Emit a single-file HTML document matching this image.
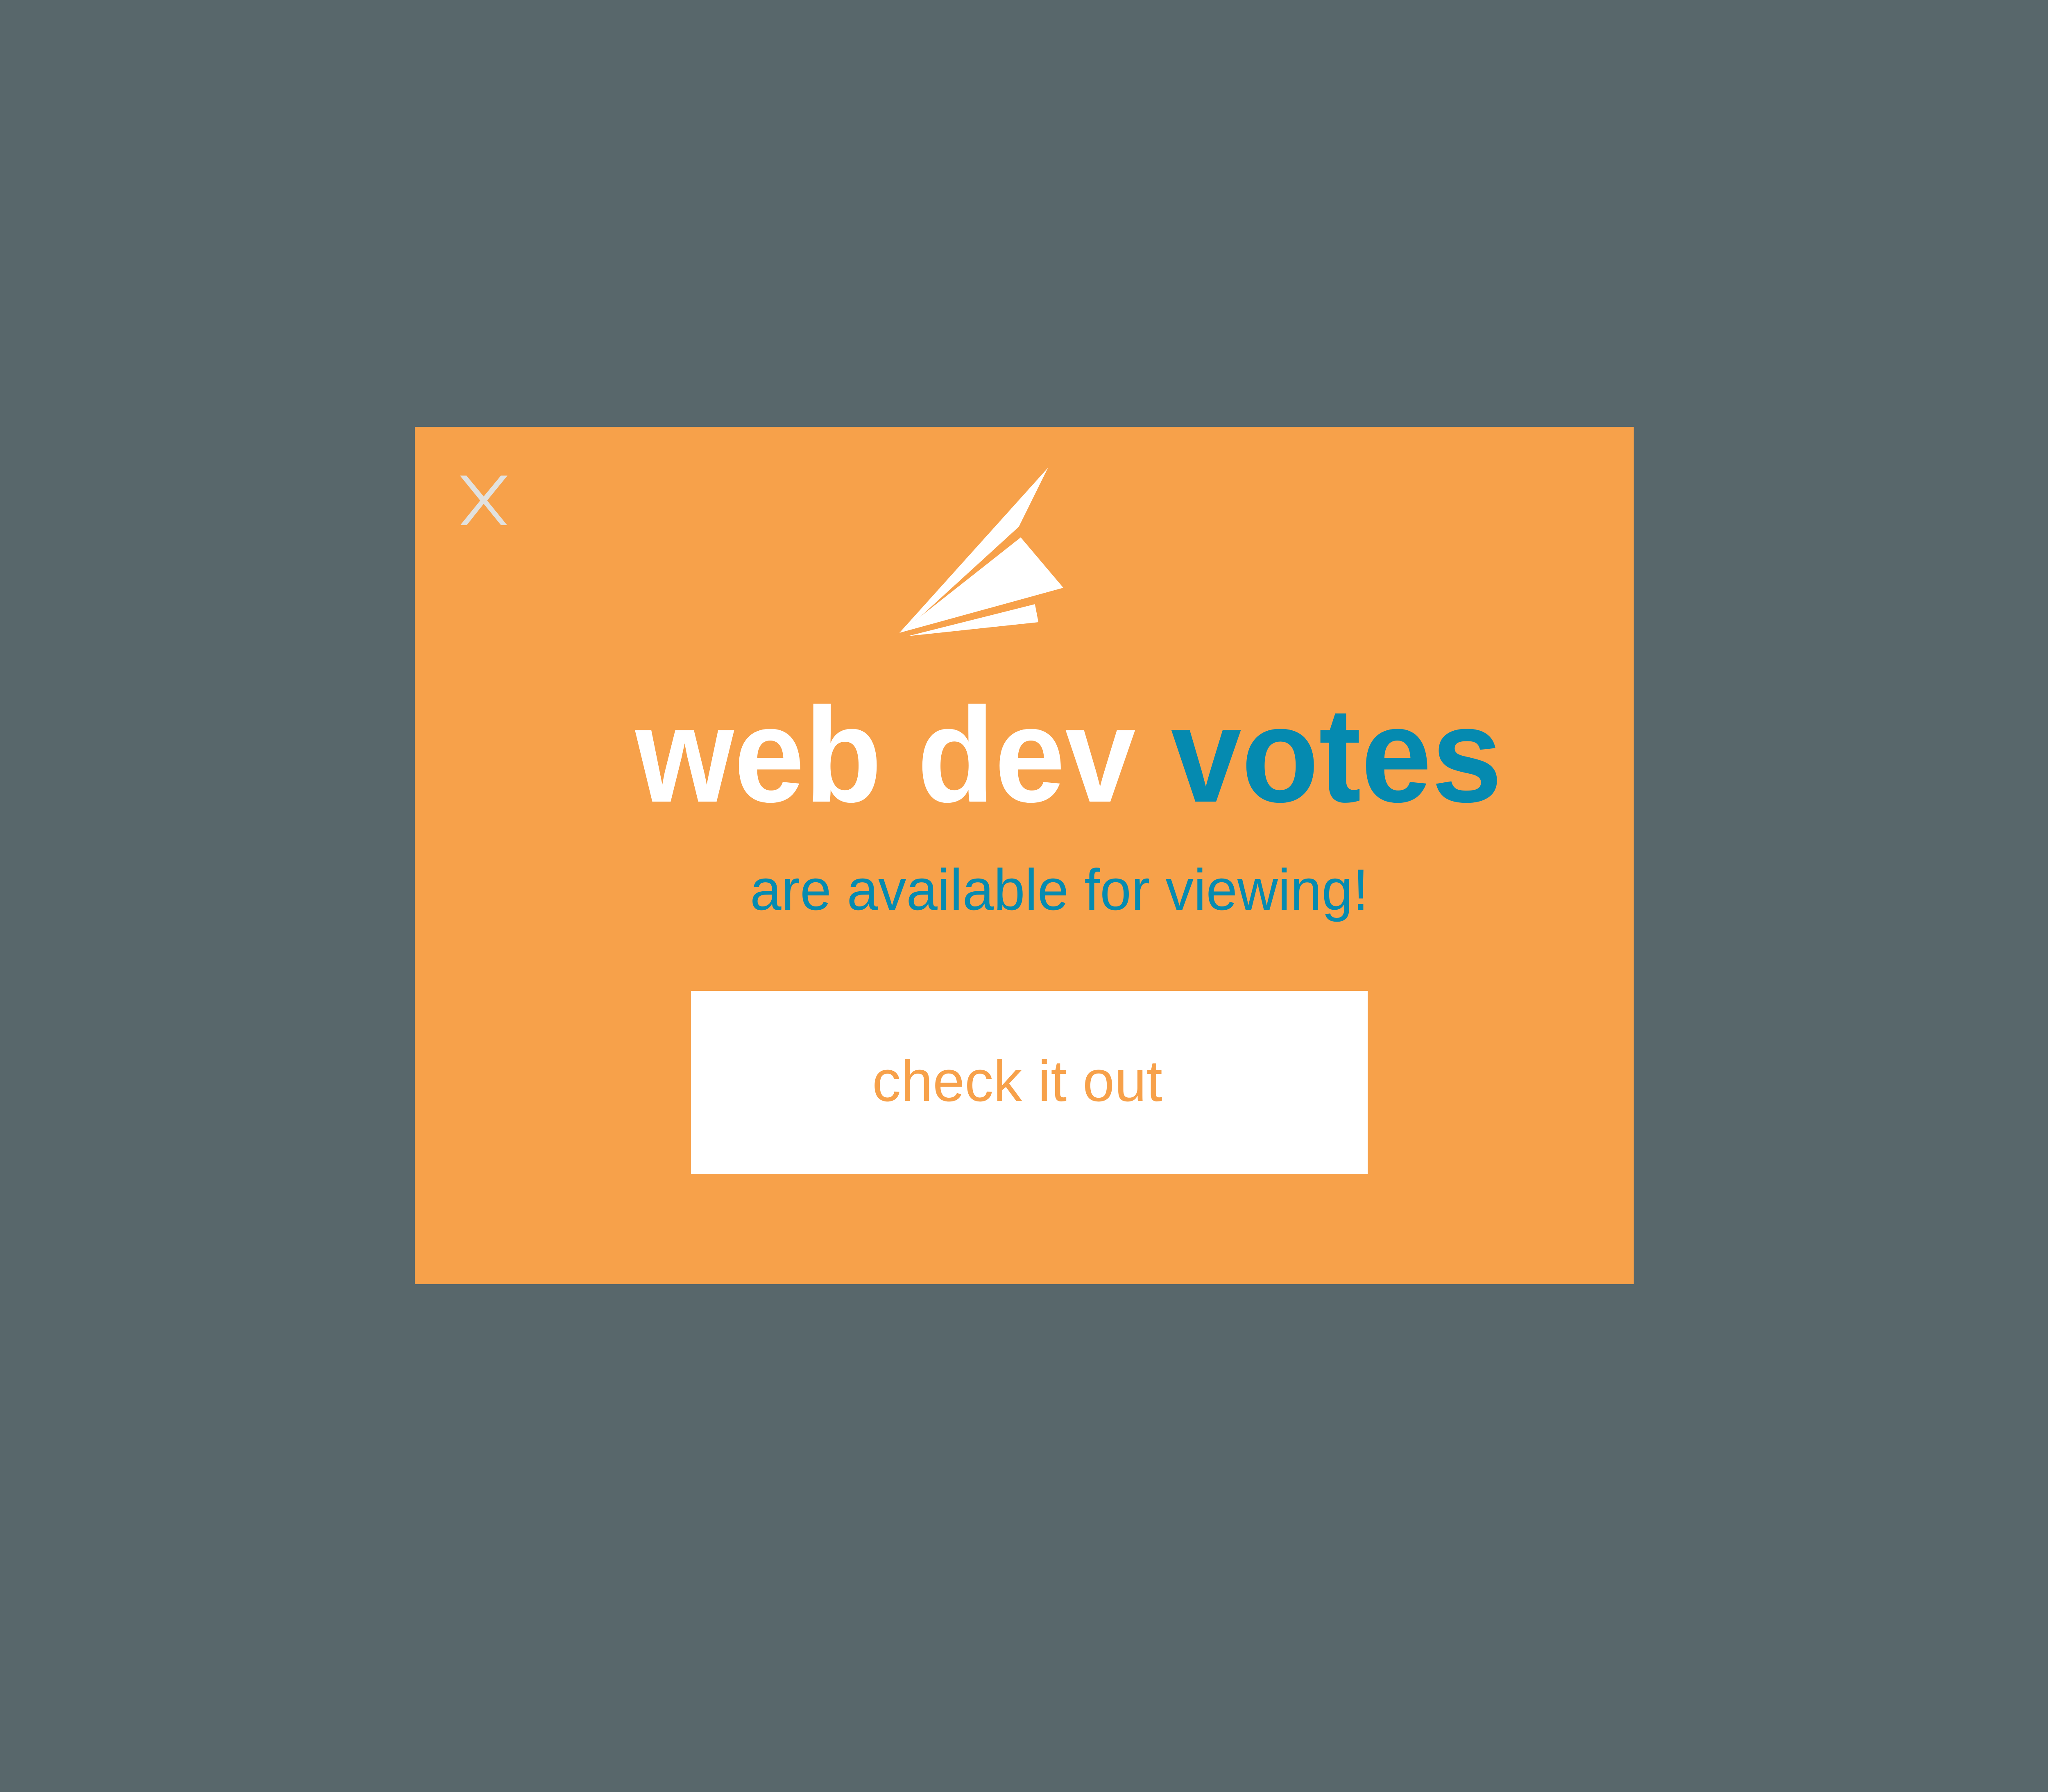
<!DOCTYPE html>
<html><head><meta charset="utf-8"><style>
html,body{margin:0;padding:0;background:#58676b;width:100%;height:100%;overflow:hidden;}
svg{display:block;width:100vw;height:100vh;}
</style></head><body>
<svg viewBox="0 0 5335 4375" preserveAspectRatio="none" xmlns="http://www.w3.org/2000/svg">
<rect width="5335" height="4375" fill="#58676b"/>
<rect x="1081" y="1042" width="3175" height="2093" fill="#f7a14a"/>
<path d="M1198 1161 H1215 L1260 1212 L1305 1161 H1322 L1269 1222 L1321 1282 H1305 L1260 1230 L1216 1282 H1199 L1251 1222 Z" fill="#e1e1df"/>
<polygon points="2343,1545 2730,1142 2654,1286 2398,1505" fill="#fff"/>
<polygon points="2343,1545 2398,1505 2659,1312 2770,1435" fill="#fff"/>
<polygon points="2365,1553 2696,1475 2705,1519" fill="#fff"/>
<text x="1655" y="1957" font-family="Liberation Sans, sans-serif" font-weight="bold" font-size="330" textLength="2258" lengthAdjust="spacingAndGlyphs"><tspan fill="#fff">web dev </tspan><tspan fill="#058ab0">votes</tspan></text>
<text x="1954" y="2221" font-family="Liberation Sans, sans-serif" font-size="142" fill="#068bb0" textLength="1611" lengthAdjust="spacingAndGlyphs">are available for viewing!</text>
<rect x="1800" y="2419" width="1763" height="447" fill="#fff"/>
<text x="2272" y="2688" font-family="Liberation Sans, sans-serif" font-size="142" fill="#f7a14a" textLength="756" lengthAdjust="spacingAndGlyphs">check it out</text>
</svg>
</body></html>
